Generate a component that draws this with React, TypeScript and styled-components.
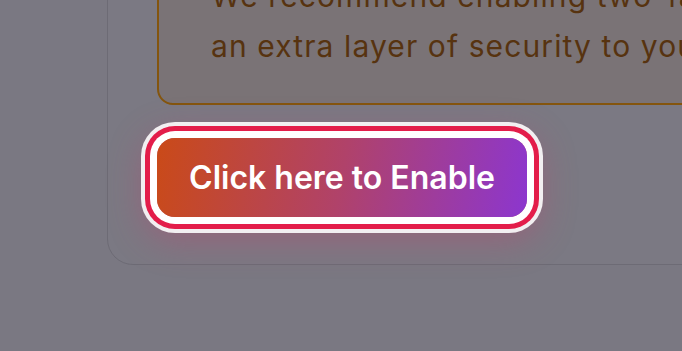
import React from "react";
import styled, { createGlobalStyle } from "styled-components";

const GlobalStyle = createGlobalStyle`
  html, body {
    margin: 0;
    padding: 0;
    height: 100%;
    overflow: hidden;
    background: #7a7882;
  }
  #root {
    height: 100%;
  }
`;

const Backdrop = styled.div`
  height: 100%;
  background: #7a7882;
  font-family: Inter, "Noto Sans", sans-serif;
`;

const Card = styled.div`
  margin-left: 107px;
  margin-top: -152px;
  width: 700px;
  box-sizing: border-box;
  background: #7b7983;
  border: 1.5px solid #6d6b75;
  border-radius: 26px;
  padding: 30px 0 47px 49px;
  display: flex;
  flex-direction: column;
  align-items: flex-start;
  gap: 33px;
`;

const Notice = styled.div`
  width: 620px;
  box-sizing: border-box;
  background: #7a7376;
  border: 2px solid #84550e;
  border-radius: 16px;
  padding: 40px 24px 32px 52px;
`;

const NoticeText = styled.p`
  margin: 0;
  color: #573310;
  font-size: 30px;
  line-height: 50px;
  letter-spacing: 1.1px;
  white-space: nowrap;
`;

const EnableButton = styled.button`
  width: 370px;
  height: 79px;
  border: none;
  border-radius: 18px;
  background: linear-gradient(100deg, #ca4a18 0%, #b0426a 50%, #8c36cf 100%);
  color: #fff;
  font-family: Inter, "Noto Sans", sans-serif;
  font-weight: 600;
  font-size: 32px;
  cursor: pointer;
  box-shadow: 0 0 0 7px #ffffff, 0 0 0 12px #e31d4a, 0 0 0 16px #f2eff1,
    0 10px 34px 14px rgba(200, 60, 110, 0.35);
`;

export default function App() {
  return (
    <Backdrop>
      <GlobalStyle />
      <Card>
        <Notice>
          <NoticeText>
            Two-factor authentication is not enabled.
            <br />
            We recommend enabling two-factor authentication to add
            <br />
            an extra layer of security to your account.
          </NoticeText>
        </Notice>
        <EnableButton>Click here to Enable</EnableButton>
      </Card>
    </Backdrop>
  );
}
